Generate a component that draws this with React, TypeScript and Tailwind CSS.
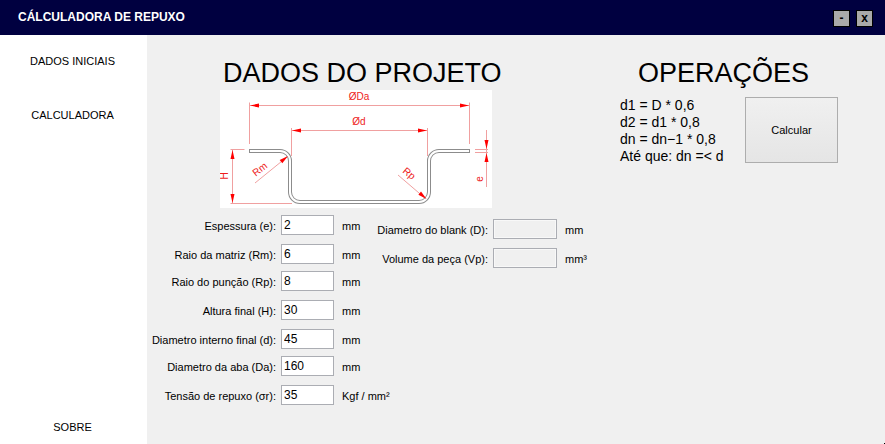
import React from "react";

type Field = { id: string; label: string; unit: string; value?: string };

const fieldGroups: Field[][] = [
  [
    { id: "e", label: "Espessura (e):", value: "2", unit: "mm" },
    { id: "rm", label: "Raio da matriz (Rm):", value: "6", unit: "mm" },
  ],
  [
    { id: "rp", label: "Raio do punção (Rp):", value: "8", unit: "mm" },
    { id: "h", label: "Altura final (H):", value: "30", unit: "mm" },
    { id: "d", label: "Diametro interno final (d):", value: "45", unit: "mm" },
  ],
  [
    { id: "da", label: "Diametro da aba (Da):", value: "160", unit: "mm" },
    { id: "sr", label: "Tensão de repuxo (σr):", value: "35", unit: "Kgf / mm²" },
  ],
];

const results: Field[] = [
  { id: "blank", label: "Diametro do blank (D):", unit: "mm" },
  { id: "volume", label: "Volume da peça (Vp):", unit: "mm³" },
];

function InputRow({ field }: { field: Field }) {
  return (
    <div className="flex h-5 items-center">
      <label htmlFor={field.id} className="mr-[5px] w-[129px] shrink-0 pt-0.5 text-right whitespace-nowrap">
        {field.label}
      </label>
      <input
        id={field.id}
        defaultValue={field.value}
        className="h-5 w-[53px] shrink-0 border border-[#abadb3] bg-white px-0.5 pb-px text-[12px] outline-none"
      />
      <span className="ml-2 pt-0.5 whitespace-nowrap">{field.unit}</span>
    </div>
  );
}

function ResultRow({ field }: { field: Field }) {
  return (
    <div className="flex h-5 items-center">
      <label htmlFor={field.id} className="mr-[5px] w-[112px] shrink-0 pt-0.5 text-right whitespace-nowrap">
        {field.label}
      </label>
      <input
        id={field.id}
        readOnly
        className="h-5 w-16 shrink-0 border border-[#abadb3] bg-[#f0f0f0] px-0.5 shadow-[inset_0_0_0_1px_#f8f8f8] outline-none"
      />
      <span className="ml-2 pt-0.5">{field.unit}</span>
    </div>
  );
}

function Diagram() {
  const profile =
    "H60 A10 10 0 0 1 70 71 V102 A10 10 0 0 0 80 112 H199 A10 10 0 0 0 209 102 V71 A10 10 0 0 1 219 61";
  return (
    <svg
      viewBox="0 0 272 118"
      className="block h-[118px] w-[272px] bg-white"
      role="img"
      aria-label="Perfil da peça"
    >
      <g fill="none" stroke="#f0a0a0" strokeWidth="1">
        <path d="M29.5 12.5V54M249.5 12.5V54M30 15.5H249" />
        <path d="M71.5 38V66M207.5 38V66M72 40.5H207" />
        <path d="M10.5 59.5H24.5M10.5 113.5H72M12.5 60V113" />
        <path d="M255 59.5H268M255 62.5H268M266.5 40V97" />
        <path d="M35 93L67 67M178 85L206 109" />
      </g>
      <path d={`M29 61${profile}H250`} fill="none" stroke="#8c8c8c" strokeWidth="4" />
      <path d={`M30 61${profile}H249`} fill="none" stroke="#ffffff" strokeWidth="2" />
      <g fill="#ff0000">
        <path d="M30 15.5L39 13.5V17.5ZM249 15.5L240 13.5V17.5Z" />
        <path d="M72 40.5L81 38.5V42.5ZM207 40.5L198 38.5V42.5Z" />
        <path d="M12.5 60L10.5 69H14.5ZM12.5 113L10.5 104H14.5Z" />
        <path d="M266.5 59L264.5 50H268.5ZM266.5 63L264.5 72H268.5Z" />
        <path d="M68 66L62.3 73.2L59.7 70Z" />
        <path d="M206.5 109L198.4 104.7L201 101.6Z" />
      </g>
      <g fill="#ee1c1c" fontSize="10" textAnchor="middle">
        <text x="139" y="10">ØDa</text>
        <text x="139" y="35">Ød</text>
        <text transform="translate(8 86) rotate(-90)">H</text>
        <text transform="translate(263 89) rotate(-90)">e</text>
        <text transform="translate(42 82) rotate(-38)">Rm</text>
        <text transform="translate(187 86) rotate(40)">Rp</text>
      </g>
    </svg>
  );
}

export default function App() {
  return (
    <div className="relative flex min-h-screen flex-col bg-[#f0f0f0] font-['Liberation_Sans',Arial,sans-serif] text-[11px] leading-[15px] text-black">
      <header className="flex h-[35px] items-center justify-between bg-[#000040] pr-3 pl-[18px] text-[12px] font-bold">
        <h1 className="text-white">CÁLCULADORA DE REPUXO</h1>
        <div className="flex gap-1.5 pt-0.5">
          <button className="flex size-[17px] items-center justify-center border border-black bg-[#a9a9a9]">-</button>
          <button className="flex size-[17px] items-center justify-center border border-black bg-[#a9a9a9]">x</button>
        </div>
      </header>

      <div className="flex flex-1">
        <nav className="flex w-[147px] shrink-0 flex-col gap-0.5 bg-white pr-0.5">
          <button className="h-[52px]">DADOS INICIAIS</button>
          <button className="h-[52px]">CALCULADORA</button>
          <button className="mt-auto h-[34px]">SOBRE</button>
        </nav>

        <main className="flex flex-1 pt-[22px]">
          <section className="w-[473px] shrink-0">
            <div className="pl-[73px]">
              <h2 className="pl-[3px] text-[27px] leading-[33px]">DADOS DO PROJETO</h2>
              <Diagram />
            </div>
            <div className="mt-[7px] flex">
              <div className="flex w-[229px] shrink-0 flex-col gap-[7px]">
                {fieldGroups.map((group, i) => (
                  <div key={i} className="flex flex-col gap-[9px]">
                    {group.map((f) => (
                      <InputRow key={f.id} field={f} />
                    ))}
                  </div>
                ))}
              </div>
              <div className="flex flex-col gap-[9px] pt-1">
                {results.map((f) => (
                  <ResultRow key={f.id} field={f} />
                ))}
              </div>
            </div>
          </section>

          <section>
            <h2 className="pl-[18px] text-[27px] leading-[33px]">OPERAÇÕES</h2>
            <div className="mt-[7px] flex">
              <div className="w-[125px] text-[14px] leading-[17px] whitespace-nowrap">
                <p>d1 = D * 0,6</p>
                <p>d2 = d1 * 0,8</p>
                <p>dn = dn−1 * 0,8</p>
                <p>Até que: dn =&lt; d</p>
              </div>
              <button className="h-[66px] w-[93px] border border-[#adadad] bg-linear-to-b from-[#f0f0f0] to-[#e5e5e5]">
                Calcular
              </button>
            </div>
          </section>
        </main>
      </div>
      <span className="absolute right-0 bottom-0 size-px bg-black" />
    </div>
  );
}
